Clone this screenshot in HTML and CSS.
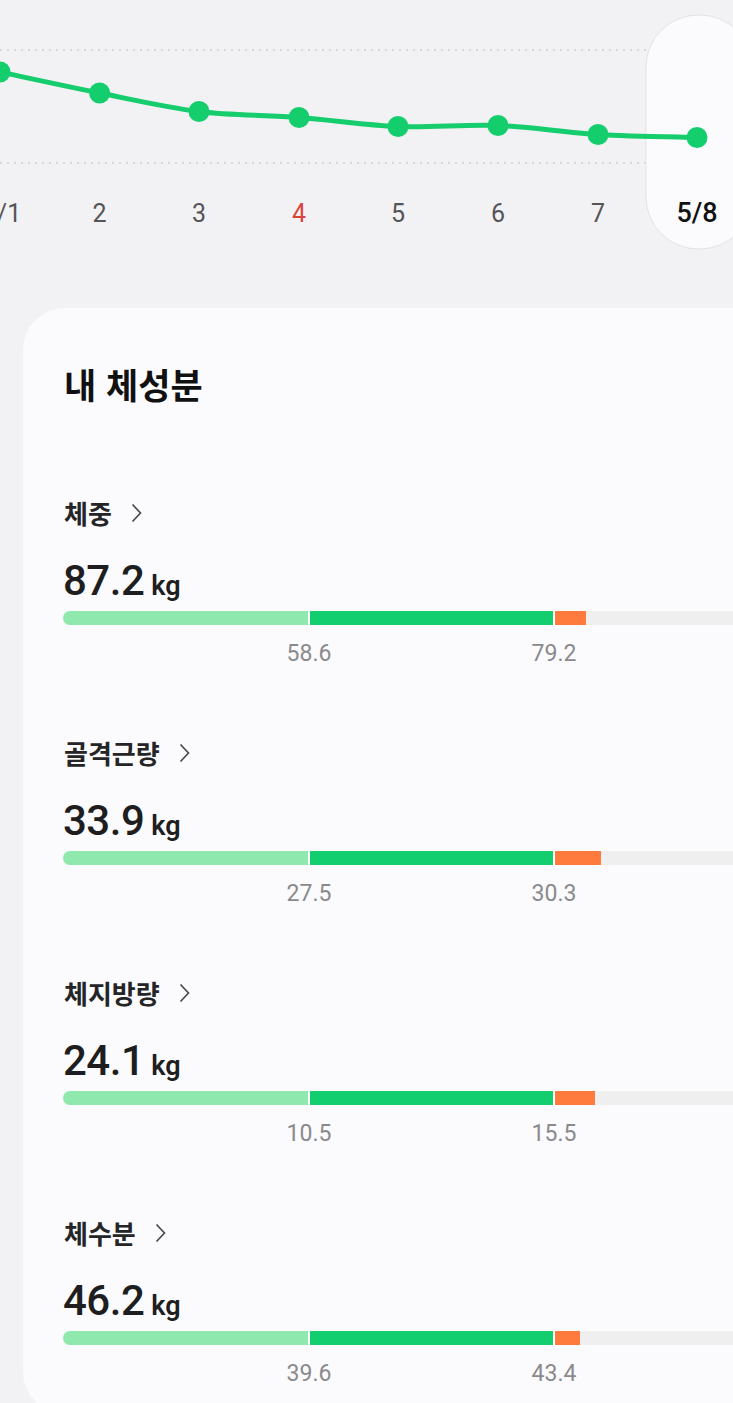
FILE: index.html
```html
<!DOCTYPE html>
<html lang="ko">
<head>
	<meta charset="utf-8" />
	<title>체성분</title>
	<link rel="stylesheet" href="styles.css">
</head>
<body>
	<div class="trend">
		<svg class="trend-chart" width="733" height="260" viewBox="0 0 733 260">
			<line class="grid" x1="0" y1="50" x2="733" y2="50" />
			<line class="grid" x1="0" y1="163" x2="733" y2="163" />
			<rect class="today" x="646" y="15" width="106" height="234" rx="52" />
			<path class="trend-line" d="M0 72 C16.6 75.5 66.4 86.4 99.6 93 C132.8 99.6 165.8 107.4 199 111.5 C232.2 115.6 265.8 115 299 117.5 C332.2 120 364.8 125.2 398 126.5 C431.2 127.8 464.7 124.2 498 125.5 C531.3 126.8 564.8 132.5 598 134.5 C631.2 136.5 680.5 137 697 137.5" />
			<g class="points">
				<circle cx="0" cy="72" r="10.5" />
				<circle cx="99.6" cy="93" r="10.5" />
				<circle cx="199" cy="111.5" r="10.5" />
				<circle cx="299" cy="117.5" r="10.5" />
				<circle cx="398" cy="126.5" r="10.5" />
				<circle cx="498" cy="125.5" r="10.5" />
				<circle cx="598" cy="134.5" r="10.5" />
				<circle cx="697" cy="137.5" r="10.5" />
			</g>
			<g class="days">
				<text x="2" y="222">5/1</text>
				<text x="99.6" y="222">2</text>
				<text x="199" y="222">3</text>
				<text class="holiday" x="299" y="222">4</text>
				<text x="398" y="222">5</text>
				<text x="498" y="222">6</text>
				<text x="598" y="222">7</text>
				<text class="current" x="697" y="222">5/8</text>
			</g>
		</svg>
	</div>

	<div class="card">
		<h2 class="card-title">내 체성분</h2>

		<div class="metric">
			<div class="metric-name">체중 <svg class="chevron" width="11" height="20" viewBox="0 0 11 20"><path d="M1.5 1.5 L9.5 10 L1.5 18.5" /></svg></div>
			<div class="metric-value">87.2<span class="unit">kg</span></div>
			<div class="bar">
				<div class="seg low"></div>
				<div class="seg mid"></div>
				<div class="seg high" style="width: 31px"></div>
			</div>
			<div class="ticks">
				<span class="tick">58.6</span>
				<span class="tick">79.2</span>
			</div>
		</div>

		<div class="metric">
			<div class="metric-name">골격근량 <svg class="chevron" width="11" height="20" viewBox="0 0 11 20"><path d="M1.5 1.5 L9.5 10 L1.5 18.5" /></svg></div>
			<div class="metric-value">33.9<span class="unit">kg</span></div>
			<div class="bar">
				<div class="seg low"></div>
				<div class="seg mid"></div>
				<div class="seg high" style="width: 46px"></div>
			</div>
			<div class="ticks">
				<span class="tick">27.5</span>
				<span class="tick">30.3</span>
			</div>
		</div>

		<div class="metric">
			<div class="metric-name">체지방량 <svg class="chevron" width="11" height="20" viewBox="0 0 11 20"><path d="M1.5 1.5 L9.5 10 L1.5 18.5" /></svg></div>
			<div class="metric-value">24.1<span class="unit">kg</span></div>
			<div class="bar">
				<div class="seg low"></div>
				<div class="seg mid"></div>
				<div class="seg high" style="width: 40px"></div>
			</div>
			<div class="ticks">
				<span class="tick">10.5</span>
				<span class="tick">15.5</span>
			</div>
		</div>

		<div class="metric">
			<div class="metric-name">체수분 <svg class="chevron" width="11" height="20" viewBox="0 0 11 20"><path d="M1.5 1.5 L9.5 10 L1.5 18.5" /></svg></div>
			<div class="metric-value">46.2<span class="unit">kg</span></div>
			<div class="bar">
				<div class="seg low"></div>
				<div class="seg mid"></div>
				<div class="seg high" style="width: 25px"></div>
			</div>
			<div class="ticks">
				<span class="tick">39.6</span>
				<span class="tick">43.4</span>
			</div>
		</div>
	</div>
</body>
</html>
```

FILE: styles.css
```css
body
{
	margin: 0;
	background-color: #f2f2f4;
	font-family: Roboto, "Noto Sans CJK KR", sans-serif;
	overflow: hidden;
}

/* weekly trend */

.trend-chart
{
	display: block;
}

.grid
{
	stroke: #d8d8da;
	stroke-width: 2;
	stroke-dasharray: 2 5;
}

.today
{
	fill: #fbfbfd;
	stroke: #e3e3e5;
	stroke-width: 1;
}

.trend-line
{
	fill: none;
	stroke: #16cd6e;
	stroke-width: 5;
	stroke-linecap: round;
}

.points circle
{
	fill: #14cd6c;
}

.days text
{
	font-family: Roboto, sans-serif;
	font-size: 25px;
	fill: #555558;
	text-anchor: middle;
}

.days .holiday
{
	fill: #d9443c;
}

.days .current
{
	fill: #111;
	font-size: 27px;
	font-weight: 500;
}

/* body composition card */

.card
{
	width: 780px;
	margin: 48px 0 0 23px;
	padding: 56px 40px 26px 40px;
	box-sizing: border-box;
	background-color: #fbfbfd;
	border-radius: 42px;
}

.card-title
{
	margin: 0 0 93px 0;
	font-family: "Noto Sans CJK KR", sans-serif;
	font-size: 35px;
	line-height: 40px;
	font-weight: 700;
	color: #111;
	padding-left: 1px;
}

.metric
{
	margin-bottom: 69px;
}

.metric:last-child
{
	margin-bottom: 0;
}

.metric-name
{
	display: flex;
	align-items: center;
	gap: 19px;
	height: 32px;
	padding-left: 1px;
	font-family: "Noto Sans CJK KR", sans-serif;
	font-size: 26px;
	line-height: 32px;
	font-weight: 700;
	color: #252527;
}

.chevron path
{
	fill: none;
	stroke: #444;
	stroke-width: 1.6;
}

.metric-value
{
	margin-top: 28px;
	height: 48px;
	font-size: 42px;
	line-height: 48px;
	font-weight: 500;
	color: #1e1e20;
	letter-spacing: -0.5px;
}

.unit
{
	margin-left: 7px;
	font-size: 27px;
	line-height: 1;
	font-weight: 600;
	letter-spacing: 0;
}

.bar
{
	display: flex;
	height: 14px;
	margin-top: 6px;
	background-color: #efefef;
	border-radius: 7px 0 0 7px;
	overflow: hidden;
}

.seg
{
	height: 100%;
}

.low
{
	width: 245px;
	background-color: #8fe8ae;
	border-right: 2px solid #fff;
}

.mid
{
	width: 243px;
	background-color: #13ce6e;
	border-right: 2px solid #fff;
}

.high
{
	background-color: #ff7b3d;
}

.ticks
{
	display: flex;
	margin-top: 15px;
	padding-left: 246px;
	font-size: 23px;
	line-height: 28px;
	color: #8a8a8c;
}

.tick
{
	display: flex;
	justify-content: center;
	width: 0;
	white-space: nowrap;
}

.tick + .tick
{
	margin-left: 245px;
}
```
